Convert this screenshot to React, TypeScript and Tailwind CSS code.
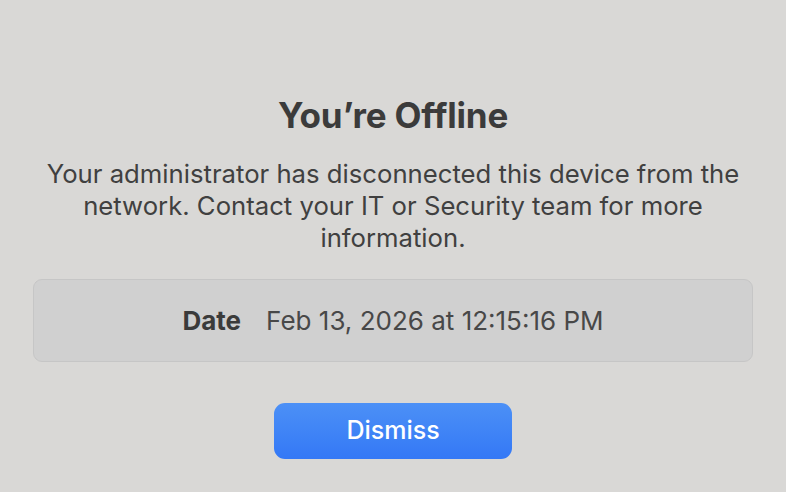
import React from "react";

function App() {
  return (
    <div
      className="w-[786px] h-[492px] bg-[#d9d8d6] flex flex-col items-center overflow-hidden text-[#3d3d3d]"
      style={{ fontFamily: "Inter, 'Noto Sans', sans-serif" }}
    >
      {/* 제목 */}
      <h1 className="mt-[93px] text-[35px] leading-[44px] font-bold tracking-[-0.2px] text-[#3b3b3b]">
        You’re Offline
      </h1>

      {/* 설명 */}
      <p className="mt-[21px] w-[740px] text-center text-[25.7px] leading-[32px] text-[#404040]">
        Your administrator has disconnected this device from the network. Contact your IT or Security team for more information.
      </p>

      {/* 날짜 박스 */}
      <div className="mt-[25px] w-[720px] h-[83px] rounded-[9px] bg-[#d0d0d0] border border-[#c6c6c6] flex items-center justify-center gap-[25px] text-[26px]">
        <span className="font-bold text-[#3b3b3b]">Date</span>
        <span className="text-[#484848]">Feb 13, 2026 at 12:15:16 PM</span>
      </div>

      {/* 닫기 버튼 */}
      <button className="mt-[41px] w-[238px] h-[56px] rounded-[11px] bg-gradient-to-b from-[#4c90f6] to-[#3478f6] text-white text-[25px] font-medium">
        Dismiss
      </button>
    </div>
  );
}

export default App;
